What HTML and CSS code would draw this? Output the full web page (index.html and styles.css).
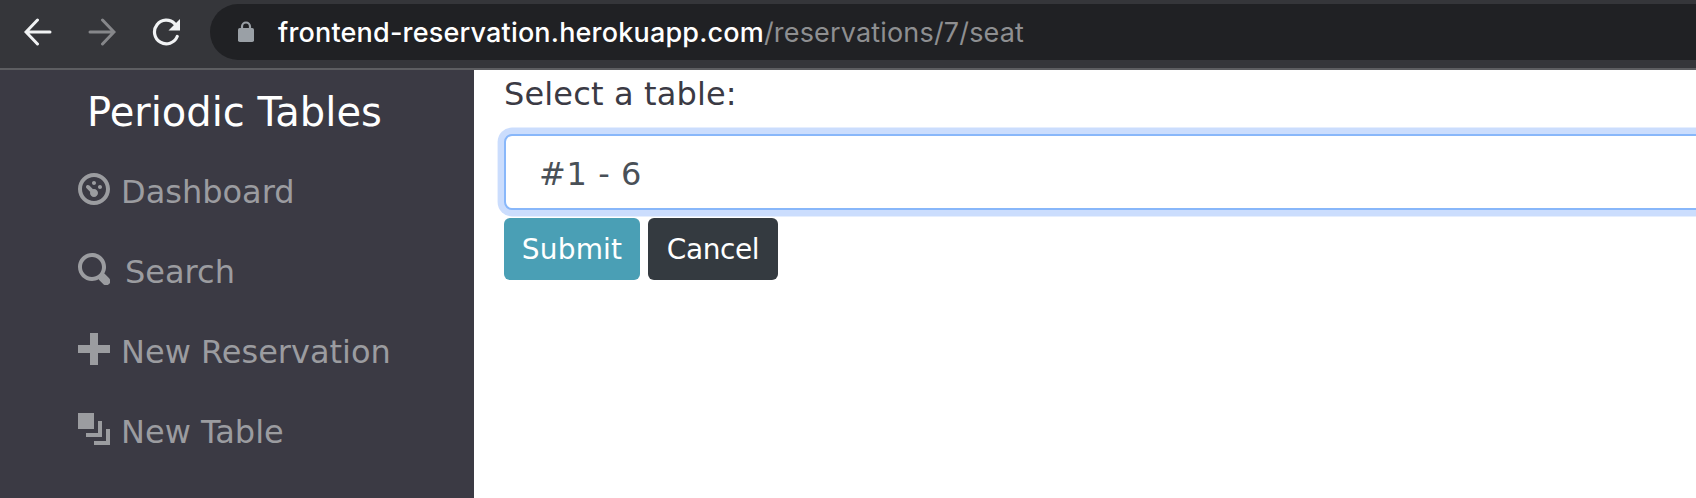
FILE: index.html
```html
<!DOCTYPE html>
<html lang="en">
<head>
<meta charset="utf-8">
<title>Periodic Tables</title>
<link rel="stylesheet" href="styles.css">
</head>
<body>
<header class="toolbar">
  <div class="controls">
    <svg class="control" viewBox="0 0 28 28"><path d="M26 14H2.500M13.500 2 2 14l11.500 12" /></svg>
    <svg class="control disabled" viewBox="0 0 28 28"><path d="M2 14h23.500M14.500 2 26 14 14.500 26" /></svg>
    <svg class="control reload" viewBox="0 0 28 28"><path d="M22.800 5.800A11.800 11.800 0 1 0 25.200 18.500" /><path class="solid" d="M28 1v11.500H16.500z" /></svg>
  </div>
  <div class="address">
    <svg class="lock" viewBox="0 0 18 22"><path class="shackle" d="M5 9V5.500a4 4 0 0 1 8 0V9" /><rect x="1" y="7" width="16" height="14" rx="1.800" /></svg>
    <span class="domain">frontend-reservation.herokuapp.com</span><span class="path">/reservations/7/seat</span>
  </div>
</header>
<div class="layout">
  <nav class="sidebar">
    <div class="brand">Periodic Tables</div>
    <a class="item dashboard"><svg viewBox="0 0 8 8"><path d="M4 0C1.800 0 0 1.800 0 4s1.800 4 4 4 4-1.800 4-4-1.800-4-4-4zm0 1c1.660 0 3 1.340 3 3s-1.340 3-3 3-3-1.340-3-3 1.340-3 3-3zm0 1c-.28 0-.5.220-.5.500s.22.500.5.500.5-.22.500-.5-.22-.5-.5-.5zm-1.660 1a.5.500 0 0 0-.190.840l.91.910c-.020.080-.060.160-.060.250 0 .55.450 1 1 1s1-.45 1-1-.45-1-1-1c-.09 0-.17.040-.25.060l-.91-.91a.5.500 0 0 0-.440-.160.500.500 0 0 0-.060 0zm3.160 0c-.28 0-.5.220-.5.500s.22.500.5.500.5-.22.500-.5-.22-.5-.5-.5z"/></svg><span>Dashboard</span></a>
    <a class="item search"><svg viewBox="0 0 8 8"><path d="M3.500 0c-1.930 0-3.500 1.570-3.500 3.500s1.570 3.500 3.500 3.500c.59 0 1.170-.14 1.660-.41a1 1 0 0 0 .130.130l1 1a1.020 1.020 0 1 0 1.440-1.440l-1-1a1 1 0 0 0-.160-.130c.27-.49.440-1.060.440-1.660 0-1.930-1.550-3.500-3.500-3.500zm0 1c1.390 0 2.500 1.110 2.500 2.500 0 .66-.24 1.270-.66 1.720l-.030.030a1 1 0 0 0-.130.130c-.44.400-1.040.630-1.690.630-1.390 0-2.500-1.110-2.500-2.500s1.110-2.500 2.500-2.500z"/></svg><span>Search</span></a>
    <a class="item reservation"><svg viewBox="0 0 8 8"><path d="M3 0v3H0v2h3v3h2V5h3V3H5V0z"/></svg><span>New Reservation</span></a>
    <a class="item table"><svg viewBox="0 0 8 8"><path d="M0 0v4h4V0zm5 2v3H2v1h4V2zm2 2v3H4v1h4V4z"/></svg><span>New Table</span></a>
  </nav>
  <main class="content">
    <label class="label">Select a table:</label>
    <div class="select"><span>#1 - 6</span></div>
    <div class="buttons">
      <button class="btn submit"><span>Submit</span></button>
      <button class="btn cancel"><span>Cancel</span></button>
    </div>
  </main>
</div>
</body>
</html>
```
FILE: styles.css
```css
* { box-sizing: border-box; }
body { margin: 0; height: 498px; overflow: hidden; display: flex; flex-direction: column; background: #fff; font-family: Verdana, "DejaVu Sans", sans-serif; }
.toolbar { height: 70px; flex: none; display: flex; padding-top: 4px; background: #35363a; border-bottom: 2px solid #5d5e61; }
.controls { width: 210px; height: 56px; flex: none; display: flex; align-items: center; gap: 36px; padding-left: 24px; }
.control { width: 28px; height: 28px; fill: none; stroke: #f1f3f4; stroke-width: 3; stroke-linecap: round; }
.disabled { stroke: #86878a; }
.reload { stroke-width: 3.2; }
.reload .solid { fill: #f1f3f4; stroke: none; }
.address { flex: 1; height: 56px; display: flex; align-items: center; padding-left: 27px; background: #202124; border-radius: 28px 0 0 28px; font: 27px/57px Inter, sans-serif; white-space: pre; }
.lock { width: 18px; height: 22px; margin-right: 23px; fill: #9aa0a6; }
.shackle { fill: none; stroke: #9aa0a6; stroke-width: 2.2; }
.domain { color: #fff; font-weight: 500; letter-spacing: 0.18px; }
.path { color: #8e8f91; letter-spacing: 0.17px; }
.layout { flex: 1; display: flex; }
.sidebar { width: 474px; flex: none; padding-top: 10px; background: #3b3a44; white-space: nowrap; }
.brand { height: 72px; padding-left: 87px; color: #fff; font-size: 40px; line-height: 64px; }
.item { height: 80px; display: flex; align-items: center; padding-left: 78px; color: #9b9ca0; font-size: 32px; }
.item svg { width: 32px; height: 32px; margin: -6px 11px 0 0; fill: currentColor; }
.search svg { margin-right: 15px; }
.content { flex: 1; min-width: 0; padding-left: 30px; overflow: hidden; }
.label { display: block; height: 64px; line-height: 48px; font-size: 32px; letter-spacing: 0.15px; color: #3b3a44; }
.select { width: 1240px; height: 76px; padding-left: 33px; border: 2px solid #88b7fa; border-radius: 8px; box-shadow: 0 0 0 6.4px #cbddfd; background: #fff; color: #495057; font-size: 32px; letter-spacing: 0.6px; line-height: 76px; }
.buttons { display: flex; gap: 8px; margin-top: 8px; }
.btn { width: 136px; height: 62px; padding: 0; border: 0; border-radius: 6px; color: #fff; font: 28px/64px Verdana, "DejaVu Sans", sans-serif; }
.submit { background: #4a9fb5; letter-spacing: 0.2px; }
.cancel { width: 130px; background: #343a40; letter-spacing: -0.4px; }
```
